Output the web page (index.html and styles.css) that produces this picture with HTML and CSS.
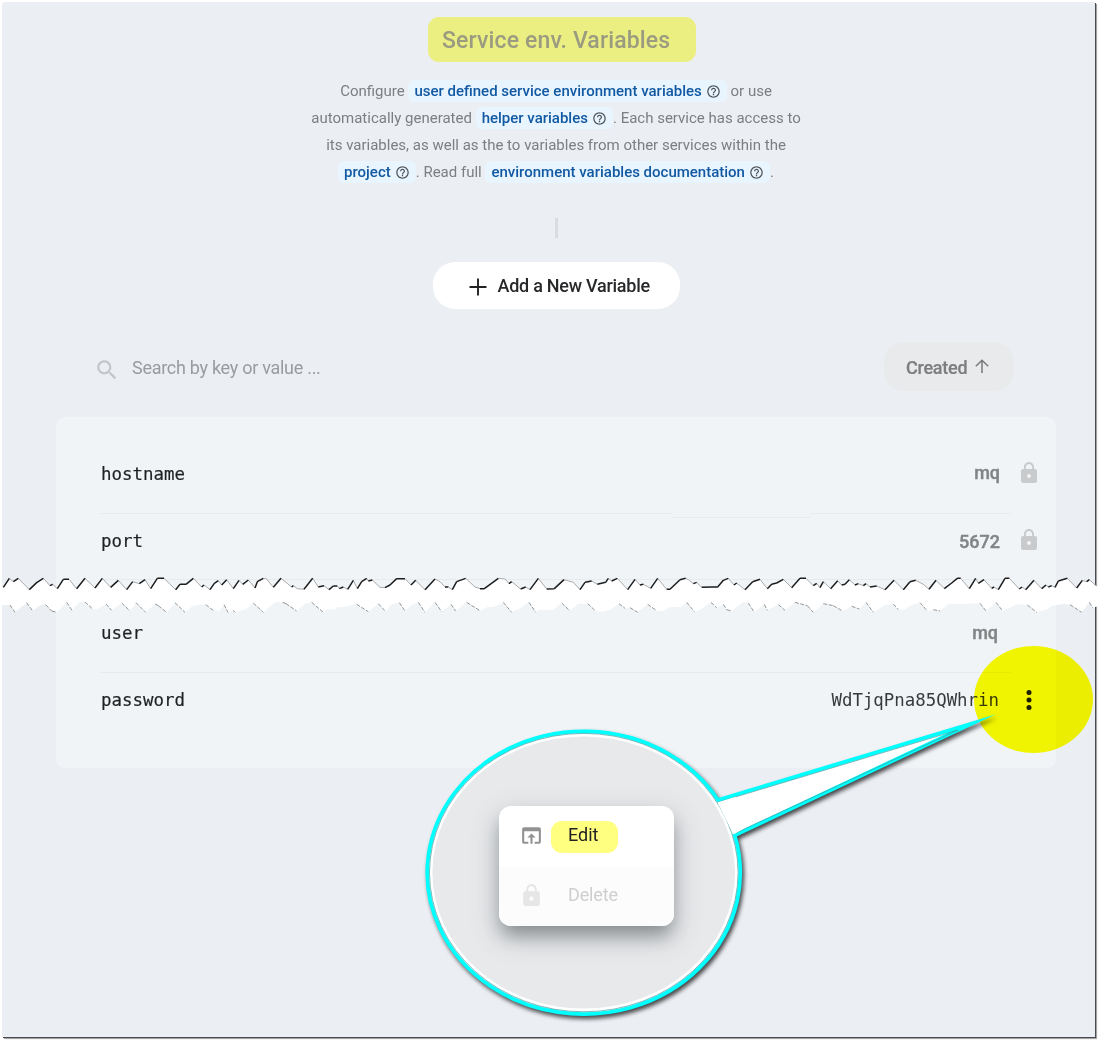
FILE: index.html
```html
<!DOCTYPE html>
<html lang="en">
<head>
<meta charset="utf-8">
<title>Service env. Variables</title>
<link rel="stylesheet" href="styles.css">
</head>
<body>
<svg class="defs" width="0" height="0" aria-hidden="true">
  <symbol id="help" viewBox="0 0 24 24"><path d="M11 18h2v-2h-2v2zm1-16C6.48 2 2 6.48 2 12s4.480 10 10 10 10-4.480 10-10S17.520 2 12 2zm0 18c-4.410 0-8-3.590-8-8s3.590-8 8-8 8 3.590 8 8-3.590 8-8 8zm0-14c-2.210 0-4 1.790-4 4h2c0-1.100.9-2 2-2s2 .9 2 2c0 2-3 1.750-3 5h2c0-2.250 3-2.500 3-5 0-2.210-1.790-4-4-4z"/></symbol>
  <symbol id="lock" viewBox="0 0 24 24"><path d="M18 8h-1V6c0-2.760-2.240-5-5-5S7 3.240 7 6v2H6c-1.100 0-2 .9-2 2v10c0 1.100.9 2 2 2h12c1.100 0 2-.9 2-2V10c0-1.100-.9-2-2-2zm-6 9c-1.100 0-2-.9-2-2s.9-2 2-2 2 .9 2 2-.9 2-2 2zm3.100-9H8.900V6c0-1.710 1.390-3.100 3.100-3.100s3.100 1.390 3.100 3.100v2z"/></symbol>
</svg>
<main class="panel">
  <div class="content">
    <h1 class="title">Service env. Variables</h1>
    <p class="intro">
      <span class="line">Configure <a class="chip">user defined service environment variables<svg><use href="#help"/></svg></a> or use</span>
      <span class="line">automatically generated <a class="chip">helper variables<svg><use href="#help"/></svg></a>. Each service has access to</span>
      <span class="line">its variables, as well as the to variables from other services within the</span>
      <span class="line"><a class="chip">project<svg><use href="#help"/></svg></a>. Read full <a class="chip">environment variables documentation<svg><use href="#help"/></svg></a>.</span>
    </p>
    <div class="tick"></div>
    <button class="add">
      <svg width="18" height="18" viewBox="0 0 18 18"><path d="M9 .5v17M.5 9h17" stroke="#222" stroke-width="1.900"/></svg>
      <span>Add a New Variable</span>
    </button>
    <div class="toolbar">
      <svg class="glass" viewBox="0 0 24 24"><path d="M15.500 14h-.79l-.28-.27C15.410 12.590 16 11.110 16 9.500 16 5.910 13.090 3 9.500 3S3 5.910 3 9.500 5.910 16 9.500 16c1.610 0 3.090-.59 4.230-1.570l.27.28v.79l5 4.990L20.490 19l-4.990-5zm-6 0C7.010 14 5 11.990 5 9.500S7.010 5 9.500 5 14 7.010 14 9.500 11.990 14 9.500 14z"/></svg>
      <span class="search">Search by key or value ...</span>
      <button class="sort"><span>Created</span><svg width="14" height="15" viewBox="0 0 14 15"><path d="M7 14V1.500M.8 7.300L7 1.200l6.200 6.100" fill="none" stroke="#7a7a7a" stroke-width="1.500"/></svg></button>
    </div>
    <section class="card">
      <div class="row first"><span class="key">hostname</span><span class="value">mq</span><svg class="lock"><use href="#lock"/></svg></div>
      <div class="rule stepped"><i></i><i></i><i></i></div>
      <div class="row second"><span class="key">port</span><span class="value">5672</span><svg class="lock"><use href="#lock"/></svg></div>
      <div class="rule"></div>
      <div class="row third"><span class="key">user</span><span class="value">mq</span></div>
      <div class="rule"></div>
      <div class="row fourth"><span class="key">password</span><span class="value secret">WdTjqPna85QWhrin</span><svg class="dots" viewBox="0 0 24 24"><circle cx="12" cy="4.600" r="2.500"/><circle cx="12" cy="12" r="2.500"/><circle cx="12" cy="19.400" r="2.500"/></svg></div>
    </section>
  </div>
</main>

<svg class="tear" width="1099" height="44" viewBox="0 570 1099 44"></svg>
<div class="spot"></div>

<svg class="callout" width="1099" height="1044" viewBox="0 0 1099 1044">
  <path class="bubble" d="M734.700 835.300L972 723.500L718 800A156.500 141.400 0 1 0 734.700 835.300Z"/>
  <path class="edge" d="M732.500 834.500L958 730L717 802.500"/>
  <ellipse class="edge" cx="583.800" cy="872.600" rx="154.300" ry="139.200"/>
  <path d="M717.500 802.500L735 797L760 819L733.500 834.500Z" fill="#fff"/>
  <ellipse cx="583.700" cy="872.500" rx="151.300" ry="136.100" fill="#e8e9eb"/>
</svg>
<div class="menu">
  <div class="item"><svg viewBox="0 0 24 24"><path d="M19 4H5c-1.110 0-2 .9-2 2v12c0 1.100.89 2 2 2h4v-2H5V8h14v10h-4v2h4c1.100 0 2-.9 2-2V6c0-1.100-.89-2-2-2zm-7 6l-4 4h3v6h2v-6h3l-4-4z"/></svg><span class="edit">Edit</span></div>
  <div class="item off"><svg><use href="#lock"/></svg><span>Delete</span></div>
</div>
<script src="tear.js"></script>
</body>
</html>
```
FILE: styles.css
```css
* { box-sizing: border-box; }
body { margin: 0; padding: 2px; height: 1044px; background: #fff; position: relative; overflow: hidden; font-family: Roboto, sans-serif; }
.defs { position: absolute; }
.panel { width: 1093px; height: 1035px; background: #ebeef3; border-radius: 3px 0 0 0; box-shadow: 1px 1px 0 #484c50, 2px 2px 1px #9a9a9a; padding-left: 54px; }
.content { width: 1000px; display: flex; flex-direction: column; align-items: center; padding-top: 15px; }
.title { margin: 0; width: 268px; height: 45px; padding-left: 14px; margin-left: 12px; border-radius: 11px; background: #ebee80; color: #9a9b80; font-size: 23px; font-weight: 500; line-height: 48px; letter-spacing: .14px; white-space: nowrap; }
.intro { margin: 16px 0 0; color: #7c7e81; font-size: 15px; display: flex; flex-direction: column; align-items: center; }
.line { height: 27px; line-height: 27px; white-space: nowrap; }
.chip { display: inline-flex; align-items: center; height: 22px; padding: 0 6px; border-radius: 6px; background: #e8f5fe; color: #1259a3; font-weight: 500; line-height: 22px; }
.chip svg { width: 15px; height: 15px; margin-left: 4px; fill: #4d5359; }
.tick { width: 3px; height: 20px; margin-top: 32px; background: #d9dce0; }
.add { width: 247px; height: 47px; margin-top: 24px; border: 0; border-radius: 22px; background: #fff; padding: 0 0 0 36px; display: flex; align-items: center; gap: 11px; font: 500 18px Roboto, sans-serif; letter-spacing: -.26px; color: #27282a; white-space: nowrap; }
.add svg { margin-top: 3px; }
.toolbar { width: 100%; height: 49px; margin-top: 33px; padding: 0 42px 0 38px; display: flex; align-items: center; }
.glass { width: 26px; height: 26px; fill: #c3c5c7; margin-top: 7px; }
.search { margin-left: 12px; color: #999b9d; font-size: 18px; letter-spacing: -.28px; margin-top: 2px; }
.sort { margin-left: auto; width: 130px; height: 49px; border: 0; border-radius: 20px; background: #e9eaeb; padding: 0 0 0 22px; display: flex; align-items: center; gap: 8px; font: 500 18px Roboto, sans-serif; letter-spacing: -.25px; color: #7d7e7f; }
.sort span { margin-top: 2px; -webkit-text-stroke: .2px #7d7e7f; }
.sort svg { margin-bottom: 1px; }
.card { width: 1000px; height: 351px; margin-top: 26px; padding: 17px 15px 0 45px; border-radius: 9px; background: #f0f4f7; }
.row { display: flex; align-items: center; font-size: 18px; }
.first { height: 79px; }
.second { height: 45px; margin-bottom: 16px; }
.third { height: 78px; margin-top: 14px; padding-right: 43px; }
.fourth { height: 54px; }
.key { flex: 1; color: #1f2022; font-family: "DejaVu Sans Mono", monospace; font-size: 17.450px; -webkit-text-stroke: .2px #1f2022; }
.value { color: #838485; font-weight: 500; -webkit-text-stroke: .4px #838485; }
.first .value, .third .value, .lock { margin-bottom: 2px; }
.second .value { margin-top: 2px; }
.lock { width: 24px; height: 24px; margin-left: 17px; fill: #c8cacb; }
.secret { color: #37393b; font-family: "DejaVu Sans Mono", monospace; font-size: 17.400px; font-weight: 400; -webkit-text-stroke: 0; }
.dots { width: 24px; height: 24px; margin-left: 18px; fill: #1d1e20; }
.rule { width: 911px; height: 1px; margin-left: -1px; background: #e8ebec; }
.stepped { height: 5px; background: none; display: flex; align-items: flex-start; }
.stepped i { height: 1px; width: 572px; background: #e8ebec; }
.stepped i:nth-child(2) { width: 138px; align-self: flex-end; }
.stepped i:nth-child(3) { width: 201px; }
.tear { position: absolute; left: 0; top: 570px; }
.tear .gap { fill: #fff; }
.tear .fall { fill: none; stroke: #a9abad; stroke-width: 1; }
.tear .rise { fill: none; stroke: #1c1d1f; stroke-width: 1.500; }
.tear .low { fill: none; stroke: #8a8c8e; stroke-width: .9; stroke-dasharray: 4 1.500; }
.spot { position: absolute; left: 974px; top: 646px; width: 119px; height: 107px; border-radius: 50%; background: #ff0; mix-blend-mode: multiply; }
.callout { position: absolute; left: 0; top: 0; }
.bubble { fill: #fff; stroke: #0ff; stroke-width: 3.700; stroke-miterlimit: 20; filter: drop-shadow(2px 3px 2px rgba(0,0,0,.7)); }
.edge { fill: none; stroke: #3c9c9c; stroke-width: .7; }
.menu { position: absolute; left: 499px; top: 806px; width: 175px; height: 120px; border-radius: 12px; background: #fff; box-shadow: 0 12px 18px -3px rgba(0,0,0,.3), 0 10px 26px 3px rgba(80,95,105,.25); }
.item { height: 60px; padding-left: 20px; display: flex; align-items: center; font-size: 18px; color: #222; }
.item svg { width: 25px; height: 25px; fill: #929292; margin-bottom: 2px; }
.item span { margin-left: 24px; margin-top: -3px; }
.item .edit { margin: 1px 0 0 7px; padding: 0 17px; width: 67px; height: 32px; line-height: 28px; border-radius: 11px; background: #ffff80; }
.off { background: #fcfcfc; color: #cfcfcf; border-radius: 0 0 12px 12px; letter-spacing: -.15px; }
.off svg { fill: #e6e6e6; }
```
FILE: tear.js
```js
// Torn-edge outlines: x,y pairs in thirds of a pixel, per 370px strip of paper.
const upper = [
  [0, "10,67 28,40 40,50 55,40 88,74 110,53 130,40 150,62 158,58 172,71 190,43 207,43 230,71 255,40 285,69 307,40 332,67 355,46 380,74 398,50 418,56 435,44 452,71 472,40 492,40 527,74 540,58 558,58 580,40 605,66 612,60 630,74 643,55 655,47 665,60 680,44 700,71 717,46 728,58 745,45 765,69 772,50 790,40 800,42 820,67 843,40 875,66 880,62 892,71 912,73 938,40 955,66 972,62 987,74 1000,63 1012,63 1018,71 1030,66 1043,73 1060,46 1072,71 1085,50"],
  [365, "5,40 10,48 22,45 45,67 60,68 75,60 95,41 120,41 138,60 152,46 180,74 210,42 225,50 240,66 250,66 262,74 275,50 302,40 330,66 345,71 358,71 400,40 420,42 432,56 440,50 467,72 482,66 495,74 520,40 545,72 568,71 597,44 625,52 645,74 660,52 680,48 697,58 722,52 730,40 740,48 757,40 788,74 810,43 825,60 835,58 857,70 878,40 905,73 915,73 945,44 962,40 970,44 985,56 995,52 1010,67 1040,66 1058,66 1075,46 1090,40"],
  [730, "0,46 12,60 20,54 45,74 68,50 90,43 112,71 125,58 140,54 160,43 185,68 210,40 228,40 250,62 260,55 270,68 280,50 302,71 323,47 335,60 345,58 358,44 375,60 385,56 400,62 408,56 420,66 440,63 465,74 492,46 520,74 540,50 557,46 580,58 597,73 618,46 643,71 665,54 682,40 692,40 718,71 737,40 745,55 762,44 785,70 792,66 805,74 825,40 838,40 868,72 876,66 887,74 912,46 935,71 948,60 955,66 965,62 975,67 985,48 1012,40 1040,69 1057,46 1070,50 1078,44 1098,62"]
];
const lower = [
  [0, "10,120 30,120 45,142 80,113 98,138 122,119 137,119 155,138 170,142 200,112 216,136 240,111 255,111 278,132 292,132 318,117 335,136 365,114 390,138 408,113 437,142 465,117 475,122 500,142 525,113 555,142 578,122 600,119 617,119 640,136 658,138 672,119 684,142 700,136 705,142 738,132 760,114 790,142 825,112 848,112 858,116 890,138 918,114 935,112 970,142 982,132 1005,134 1012,126 1030,126 1055,121 1070,118"],
  [365, "10,140 40,116 62,140 80,117 103,113 120,138 140,120 160,112 180,142 210,112 230,140 258,118 272,138 305,112 345,137 368,126 385,126 400,120 415,112 440,142 465,130 492,112 512,142 525,134 565,134 590,114 615,138 640,116 668,116 692,138 715,140 735,134 762,116 780,130 795,128 818,142 848,118 875,137 895,138 915,126 948,126 965,112 988,140 1003,136 1038,112 1055,128 1075,118 1085,134"],
  [730, "5,138 38,112 55,114 73,142 103,118 112,136 145,119 165,136 195,112 232,122 250,142 280,116 310,122 338,138 365,124 388,132 408,112 430,142 465,120 490,117 505,134 522,134 545,120 570,113 592,138 610,134 630,138 655,116 712,116 750,115 768,138 798,112 818,138 860,118 892,120 920,142 950,134 965,122 1000,117 1020,119 1055,142 1078,112 1088,128"]
];
const decode = strips => strips.flatMap(([left, text]) =>
  text.split(" ").map(pair => {
    const [x, y] = pair.split(",").map(Number);
    return [left + x / 3, 565 + y / 3];
  }));
const top1 = decode(upper), low1 = decode(lower);
const segments = (points, keep) => points.slice(1).map((p, i) => [points[i], p])
  .filter(([a, b]) => keep(a, b)).map(([a, b]) => `M${a}L${b}`).join("");
const outline = [[0, 587], ...top1, [1099, 588], [1099, 606], ...low1.slice().reverse(), [0, 606]];
document.querySelector(".tear").innerHTML =
  `<path class="gap" d="M${outline.join("L")}Z"/>` +
  `<path class="fall" d="${segments(top1, (a, b) => b[1] > a[1])}"/>` +
  `<path class="rise" d="${segments(top1, (a, b) => b[1] <= a[1])}"/>` +
  `<path class="low" d="${segments(low1, (a, b) => b[1] > a[1] + 1)}"/>`;
```
